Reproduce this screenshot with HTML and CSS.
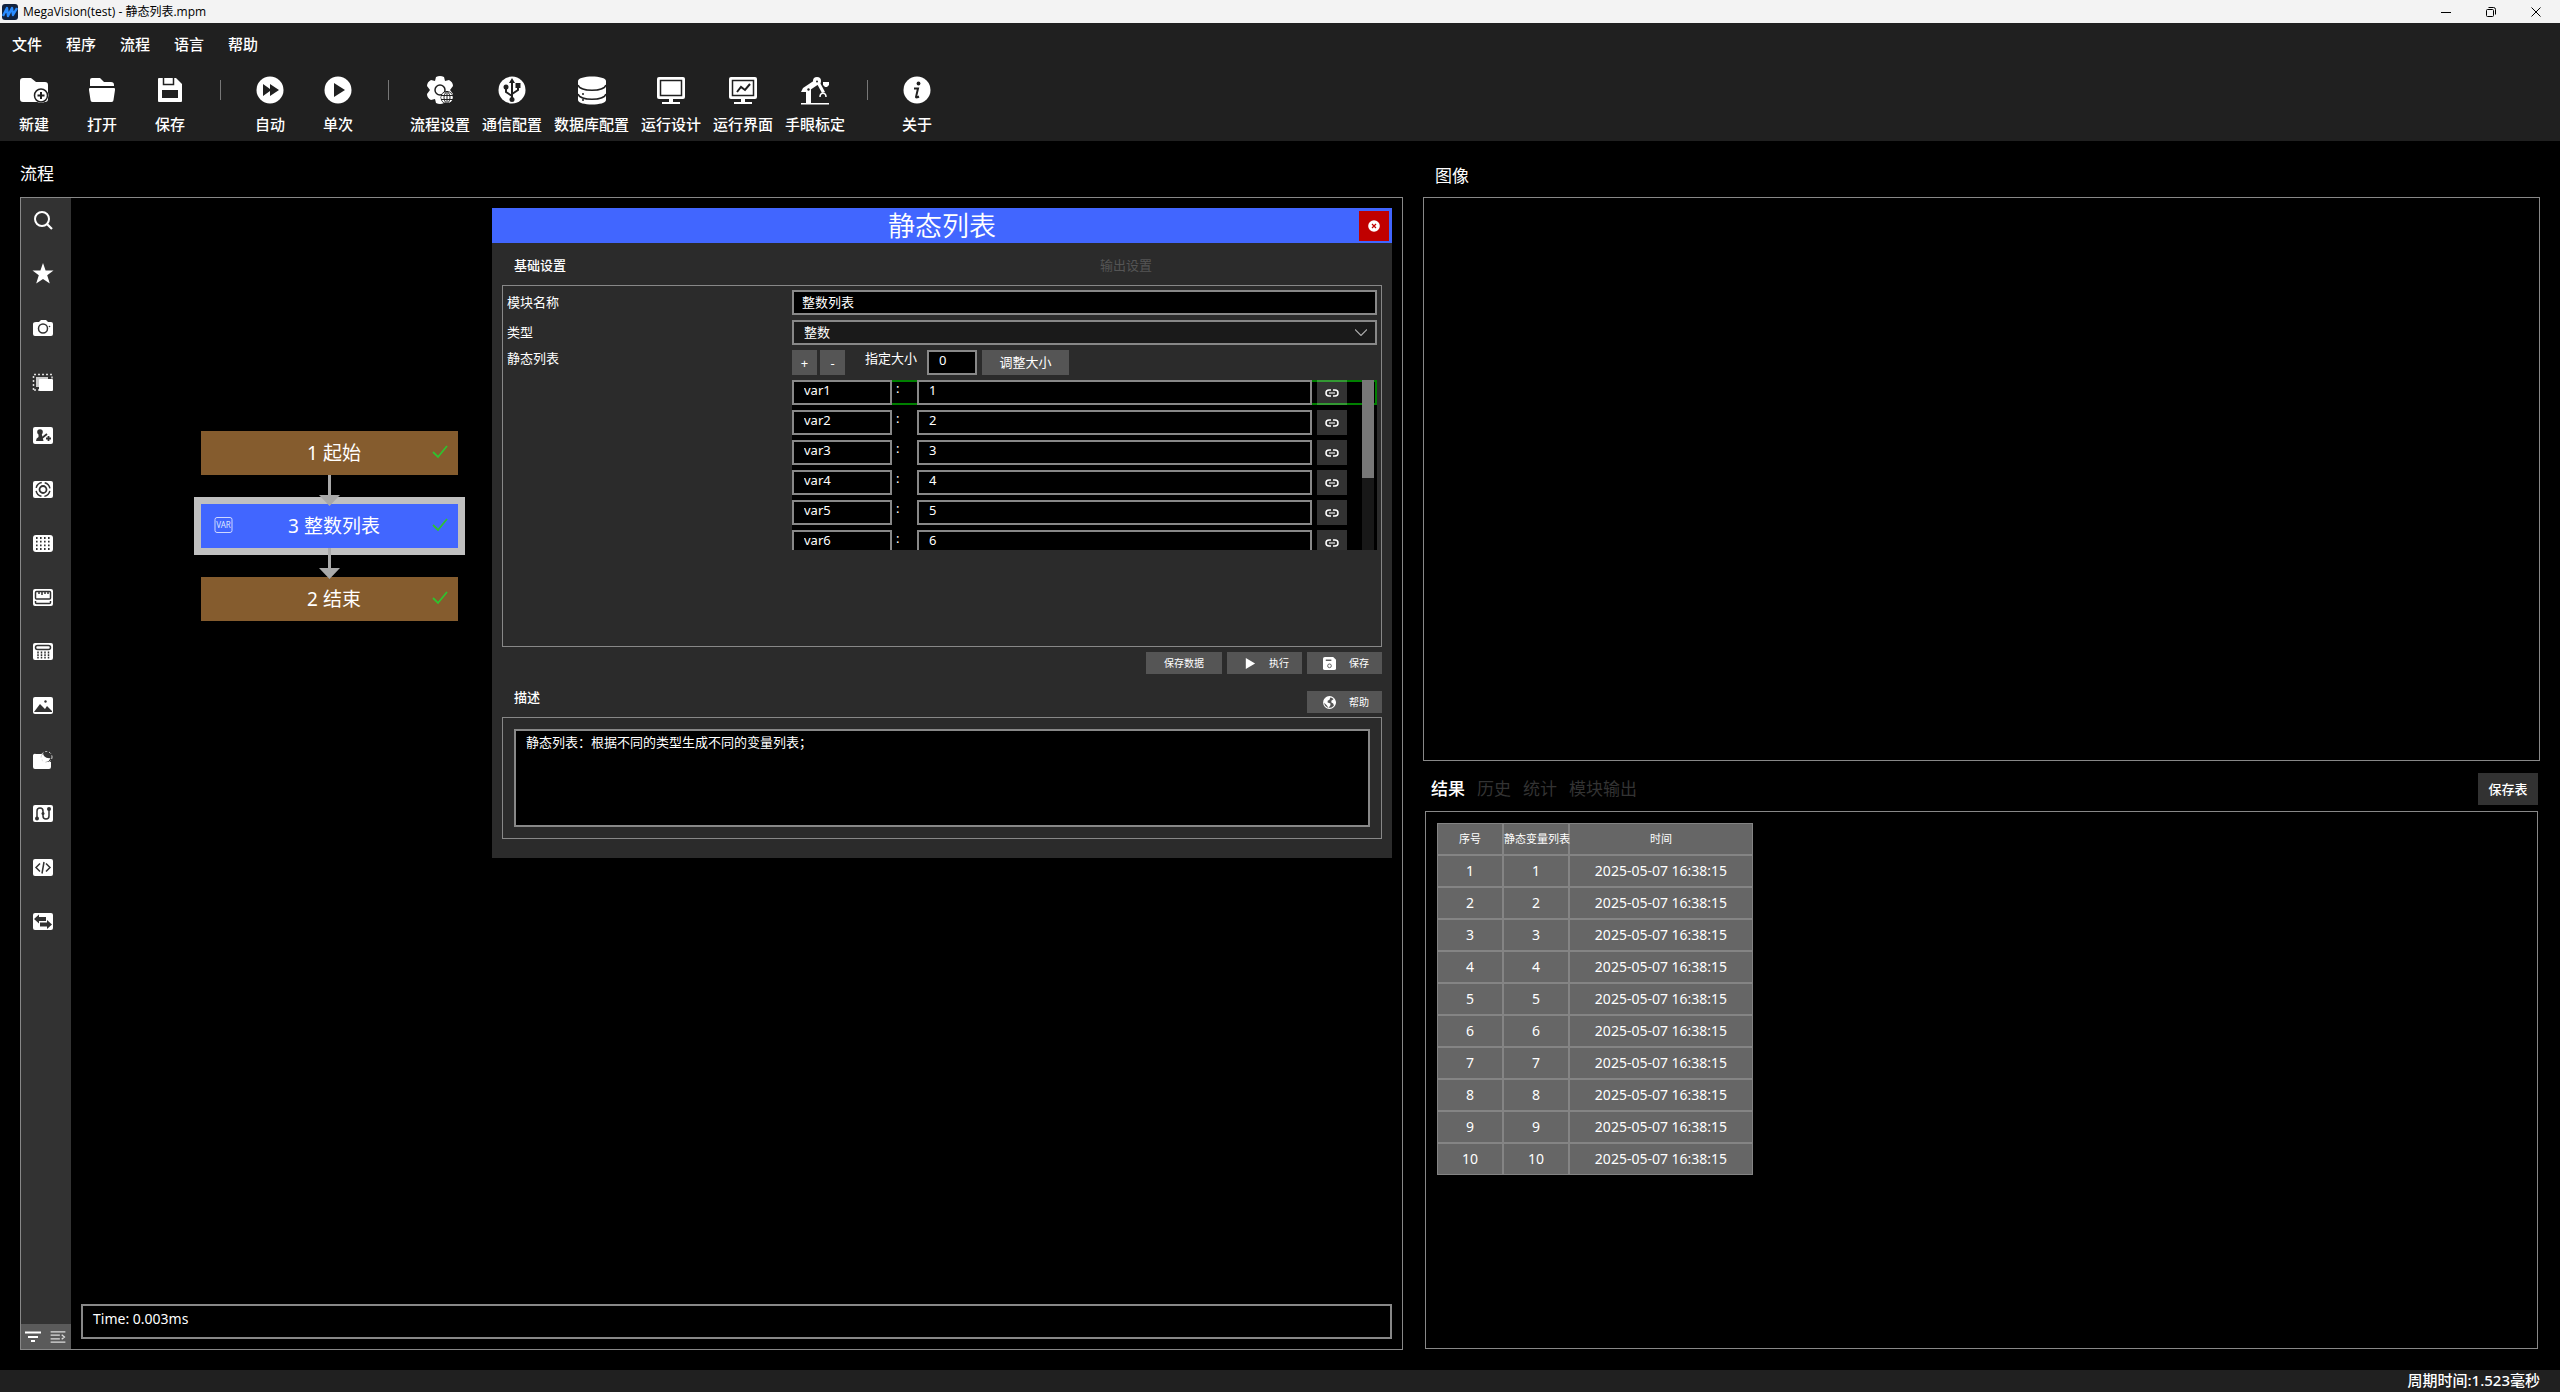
FILE: index.html
```html
<!DOCTYPE html>
<html lang="zh-CN">
<head>
<meta charset="utf-8">
<title>MegaVision(test) - 静态列表.mpm</title>
<link rel="stylesheet" href="styles.css">
</head>
<body>
<svg class="sprite" aria-hidden="true">
  <symbol id="check" viewBox="0 0 16 14"><path d="M1 7l5 5L15 1" fill="none" stroke="#2fc22f" stroke-width="1.8"/></symbol>
  <symbol id="link" viewBox="0 0 14 8"><path d="M6 1H4a3 3 0 0 0 0 6h2M8 1h2a3 3 0 0 1 0 6H8" fill="none" stroke="#fff" stroke-width="1.5"/><path d="M4 4h6" stroke="#bbb" stroke-width="1.6"/></symbol>
</svg>

<header class="titlebar">
  <svg class="logo" viewBox="0 0 16 16"><rect width="16" height="16" rx="3" fill="#12233f"/><path d="M1 12L5 4l1 8 4-8 1 7 4-7" fill="none" stroke="#2a8cff" stroke-width="2.400" stroke-linejoin="round"/></svg>
  <span class="app-name">MegaVision(test) - 静态列表.mpm</span>
  <button class="win" aria-label="最小化"><svg viewBox="0 0 12 12"><path d="M1 6.5h10" stroke="#000"/></svg></button>
  <button class="win" aria-label="还原"><svg viewBox="0 0 12 12" fill="none" stroke="#000"><rect x="1.5" y="3.5" width="7" height="7" rx="1" fill="none"/><path d="M3.5 1.5h5a2 2 0 0 1 2 2v5" fill="none"/></svg></button>
  <button class="win" aria-label="关闭"><svg viewBox="0 0 12 12"><path d="M1.5 1.5l9 9M10.5 1.5l-9 9" stroke="#000"/></svg></button>
</header>

<div class="topbar">
  <nav class="menu">
    <button>文件</button><button>程序</button><button>流程</button><button>语言</button><button>帮助</button>
  </nav>
  <div class="toolbar">
    <button class="tool"><svg viewBox="0 0 28 28"><path d="M3 2h8l5 4h9a3 3 0 0 1 3 3v14a3 3 0 0 1-3 3H3a3 3 0 0 1-3-3V5a3 3 0 0 1 3-3z"/><circle cx="21" cy="19.500" r="7.500"/><circle class="cut" cx="21" cy="19.500" r="6.500"/><path class="cut thick" d="M21 16v7M17.500 19.500h7"/></svg>新建</button>
    <button class="tool"><svg viewBox="0 0 28 28"><path d="M4 2h8l4 4h7a3 3 0 0 1 3 3v1H2V4a2 2 0 0 1 2-2z"/><path d="M2 12h24q1.500 0 1 2l-1.500 10a2 2 0 0 1-2 2h-19a2 2 0 0 1-2-2L1 14q-.5-2 1-2z"/></svg>打开</button>
    <button class="tool"><svg viewBox="0 0 28 28"><path d="M2 3a1 1 0 0 1 1-1h17l6 6v17a1 1 0 0 1-1 1H3a1 1 0 0 1-1-1z"/><path class="cut" d="M7.500 2v6.500h10V2"/><path class="dark" d="M6 14h16v8H6z"/></svg>保存</button>
    <span class="sep"></span>
    <button class="tool"><svg viewBox="0 0 28 28"><circle cx="14" cy="14" r="13.500"/><path class="dark" d="M7 8l7 5V8l9 6-9 6v-5l-7 5z"/></svg>自动</button>
    <button class="tool"><svg viewBox="0 0 28 28"><circle cx="14" cy="14" r="13.500"/><path class="dark" d="M10 7l11 7-11 7z"/></svg>单次</button>
    <span class="sep"></span>
    <button class="tool"><svg viewBox="0 0 28 28"><path d="M10 1q4-2 8 0l1 4 4-1q4 2 4 6l-3 4 3 4q0 4-4 6l-4-1-1 4q-4 2-8 0l-1-4-4 1q-4-2-4-6l3-4-3-4q0-4 4-6l4 1z"/><circle class="cut" cx="14" cy="14" r="5"/><circle class="dark" cx="21" cy="21.500" r="6.500"/><circle cx="21" cy="21.500" r="5.800"/><path class="cut thin" d="M15 19.500h12M15 23.500h12M21 15v13M21 15c-4 4-4 9 0 13M21 15c4 4 4 9 0 13"/></svg>流程设置</button>
    <button class="tool"><svg viewBox="0 0 28 28"><circle cx="14" cy="14" r="13.500"/><path class="cut thick" d="M14 4v19M14 20l-6-4v-5M14 18l6-4V9"/><path class="dark" d="M11 7l3-5 3 5zM17.500 7h5v5h-5z"/><circle class="dark" cx="8" cy="11" r="2.500"/><circle class="dark" cx="14" cy="23.500" r="2.500"/></svg>通信配置</button>
    <button class="tool"><svg viewBox="0 0 28 28"><path d="M0 5C0-1 28-1 28 5v19c0 6-28 6-28 0z"/><path class="cut" d="M0 9c2 7 26 7 28 0M0 18c2 7 26 7 28 0"/><circle class="dark" cx="5" cy="18" r="1"/><circle class="dark" cx="5" cy="24" r="1"/></svg>数据库配置</button>
    <button class="tool"><svg viewBox="0 0 28 28"><rect y="1" width="28" height="22" rx="2"/><path class="cut" d="M3.500 4.500h21v15h-21z"/><path d="M12 23h4v3h-4zM5 26h18v2H5z"/></svg>运行设计</button>
    <button class="tool"><svg viewBox="0 0 28 28"><rect y="1" width="28" height="22" rx="2"/><path class="cut" d="M3.500 4.500h21v15h-21z"/><path class="cut thick" d="M8 16l4-5 4 3 5-6"/><path d="M12 23h4v3h-4zM5 26h18v2H5z"/></svg>运行界面</button>
    <button class="tool"><svg viewBox="0 0 28 28"><path d="M0 27h28v1.500H0zM5 13h5v14H5zM0 16l2-4 12-8 4 4-12 8z"/><circle cx="16" cy="5" r="4"/><path d="M17 3l7 13-3 1-6-11z"/><path d="M22 6h6v3l-2 2h-2l-2-2z"/><circle class="dark" cx="7.500" cy="13.500" r="1.200"/><circle class="dark" cx="16" cy="5.500" r="1"/><path d="M19 21c0-5 6-5 6 0" fill="none" stroke="#fff" stroke-width="1.500"/></svg>手眼标定</button>
    <span class="sep"></span>
    <button class="tool"><svg viewBox="0 0 28 28"><circle cx="14" cy="14" r="13.500"/><circle class="dark" cx="15.500" cy="7.500" r="1.900"/><path class="cut thick" d="M11 12.500h4l-2 8.500q0 1 3-.5"/></svg>关于</button>
  </div>
</div>

<main class="workspace">
  <section class="column">
    <h2 class="heading">流程</h2>
    <div class="flow">
      <aside class="rail">
        <div class="rail-tools">
          <button aria-label="搜索"><svg viewBox="0 0 20 18"><circle cx="9" cy="8" r="7" fill="none" stroke="#fff" stroke-width="2"/><path d="M14 13l5 5" stroke="#fff" stroke-width="2.200"/></svg></button>
          <button aria-label="收藏"><svg viewBox="0 0 20 18"><path d="M10-2l2.600 7.500H20.500l-6.300 4.700L16.800 18.500 10 14 3.200 18.500 5.800 10.200-.5 5.500h7.900z"/></svg></button>
          <button aria-label="相机"><svg viewBox="0 0 20 18"><path d="M3 3h3l2-2h5l2 2h3a2 2 0 0 1 2 2v10a2 2 0 0 1-2 2H2a2 2 0 0 1-2-2V5q0-2 3-2z"/><circle class="hole" cx="10" cy="9.500" r="4.500"/><circle class="ink" cx="16.500" cy="7.500" r=".8"/></svg></button>
          <button aria-label="区域"><svg viewBox="0 0 20 18"><path d="M.5 17V1.500H19V6M1 17h6" fill="none" stroke="#ddd" stroke-width="1.500" stroke-dasharray="2 2"/><path d="M3 4h12v10H3z" fill="#ccc"/><rect x="6" y="6" width="14" height="12" rx="1"/></svg></button>
          <button aria-label="定位"><svg viewBox="0 0 20 18"><rect width="20" height="17" rx="2"/><circle class="ink" cx="7" cy="5" r="2.800"/><path class="ink" d="M5.500 6h3l2 8H3q0-3 2.500-4z"/><path class="hole thick" d="M9 11l5-4M15.500 9v5M13 11.500h5"/></svg></button>
          <button aria-label="检测"><svg viewBox="0 0 20 18"><rect width="20" height="17" rx="2"/><circle class="hole thick" cx="10" cy="8.500" r="3.500"/><circle class="hole" cx="10" cy="8.500" r="7" stroke-dasharray="8 3" stroke-dashoffset="-1.500"/></svg></button>
          <button aria-label="标定板"><svg viewBox="0 0 20 18"><rect width="20" height="17" rx="3"/><path class="hole thick" stroke-dasharray="1.600 2.400" d="M3 3h15M3 6.700h15M3 10.300h15M3 14h15"/></svg></button>
          <button aria-label="测量"><svg viewBox="0 0 20 18"><rect width="20" height="17" rx="2"/><path class="hole" d="M2.500 9V3.500q0-1 1-1h13q1 0 1 1V9q0 1-1 1h-13q-1 0-1-1zM6 2v3M9 2v4M12 2v3M15 2v3M2.500 12v1.500q0 1 1 1h13q1 0 1-1V12"/></svg></button>
          <button aria-label="计算"><svg viewBox="0 0 20 18"><rect width="20" height="17" rx="2"/><rect class="hole" x="2.500" y="2.500" width="15" height="4" rx="2"/><path class="hole" stroke-dasharray="2 .7" d="M5 8.500v7M8.500 8.500v7M12 8.500v7M15.500 8.500v7"/></svg></button>
          <button aria-label="图像"><svg viewBox="0 0 20 18"><rect width="20" height="17" rx="2"/><path class="ink" d="M1 15l6-8 5 5 2-3 5 5v1z"/><circle class="ink" cx="12.500" cy="4.500" r="1.200"/></svg></button>
          <button aria-label="缺陷"><svg viewBox="0 0 20 18"><path d="M3 3h6q-2 8 9 8v5a2 2 0 0 1-2 2H2a2 2 0 0 1-2-2V5a2 2 0 0 1 3-2z"/><circle cx="13" cy="6" r="4.500" fill="#fff"/><path class="ink" d="M10 1q0 7 8 6V1z"/><circle cx="13.500" cy="6" r="5.500" fill="none" stroke="#ddd" stroke-dasharray="2 2"/></svg></button>
          <button aria-label="流程"><svg viewBox="0 0 20 18"><rect width="20" height="17" rx="2"/><path class="hole" d="M4 14V6q0-3 3-3t3 3v5q0 3 3 3t3-3V4"/><circle class="ink" cx="4" cy="13.500" r="2"/><circle class="ink" cx="16" cy="4" r="2"/><circle class="ink" cx="10" cy="8.500" r="1.500"/></svg></button>
          <button aria-label="脚本"><svg viewBox="0 0 20 18"><rect width="20" height="17" rx="2"/><path class="hole" d="M7 4.500L3 8.500l4 4M13 4.500l4 4-4 4M11 3L9 14.500"/></svg></button>
          <button aria-label="通信"><svg viewBox="0 0 20 18"><rect width="20" height="17" rx="2"/><path class="ink" d="M1 6l5-4.500V4h7v4H6v2.500zM19 11.500L14 7v2.500H7v4h7V16z"/></svg></button>
        </div>
        <div class="rail-foot">
          <button aria-label="筛选"><svg viewBox="0 0 16 12"><path d="M0 1.500h16M3 6h10M6 10h4" stroke="#fff" stroke-width="2"/></svg></button>
          <button aria-label="列表"><svg viewBox="0 0 16 13"><path d="M0 1h16M0 4.500h10M0 8.500h10M0 12h16M12 4l3 2.500L12 9" fill="none" stroke="#ddd" stroke-width="1.400"/></svg></button>
        </div>
      </aside>
      <div class="canvas">
        <div class="node n1"><span>1 起始</span><svg class="ok"><use href="#check"/></svg></div>
        <div class="node n2 selected"><svg class="var" viewBox="0 0 18 16"><rect x=".5" y=".5" width="17" height="15" rx="2" fill="none" stroke="#cfd8ff"/><text x="9" y="11" text-anchor="middle">VAR</text></svg><span>3 整数列表</span><svg class="ok"><use href="#check"/></svg></div>
        <div class="node n3"><span>2 结束</span><svg class="ok"><use href="#check"/></svg></div>
        <svg class="arrow a1" viewBox="0 0 21 31"><path d="M9 0h3v20h9L10.500 31 0 20h9z"/></svg>
        <svg class="arrow a2" viewBox="0 0 21 31"><path d="M9 0h3v20h9L10.500 31 0 20h9z"/></svg>

        <section class="dialog" role="dialog" aria-labelledby="dlg-title">
          <header class="dlg-head"><h3 id="dlg-title">静态列表</h3><button class="close" aria-label="关闭"><svg viewBox="0 0 12 12"><circle cx="6" cy="6" r="5.800" fill="#fff"/><path d="M4 4l4 4M8 4L4 8" stroke="#c00000" stroke-width="1.200"/></svg></button></header>
          <nav class="dlg-tabs"><button class="on">基础设置</button><button>输出设置</button></nav>
          <div class="form">
            <label for="name">模块名称</label>
            <input id="name" class="field" value="整数列表">
            <label for="type">类型</label>
            <div class="pick"><select id="type" class="field"><option>整数</option></select><svg viewBox="0 0 12 7"><path d="M0 .5l6 6 6-6" fill="none" stroke="#aaa" stroke-width="1.200"/></svg></div>
            <span class="list-label">静态列表</span>
            <div class="list-side">
              <div class="size-row">
                <button class="btn sq">+</button><button class="btn sq">-</button>
                <label for="size">指定大小</label><input id="size" class="field raised" value="0"><button class="btn resize">调整大小</button>
              </div>
              <div class="list">
                <div class="item active"><input class="field raised" aria-label="名称" value="var1"><b>:</b><input class="field raised" aria-label="值" value="1"><button aria-label="链接"><svg><use href="#link"/></svg></button></div>
                <div class="item"><input class="field raised" aria-label="名称" value="var2"><b>:</b><input class="field raised" aria-label="值" value="2"><button aria-label="链接"><svg><use href="#link"/></svg></button></div>
                <div class="item"><input class="field raised" aria-label="名称" value="var3"><b>:</b><input class="field raised" aria-label="值" value="3"><button aria-label="链接"><svg><use href="#link"/></svg></button></div>
                <div class="item"><input class="field raised" aria-label="名称" value="var4"><b>:</b><input class="field raised" aria-label="值" value="4"><button aria-label="链接"><svg><use href="#link"/></svg></button></div>
                <div class="item"><input class="field raised" aria-label="名称" value="var5"><b>:</b><input class="field raised" aria-label="值" value="5"><button aria-label="链接"><svg><use href="#link"/></svg></button></div>
                <div class="item"><input class="field raised" aria-label="名称" value="var6"><b>:</b><input class="field raised" aria-label="值" value="6"><button aria-label="链接"><svg><use href="#link"/></svg></button></div>
                <div class="scroll"><div class="thumb"></div></div>
              </div>
            </div>
          </div>
          <div class="actions">
            <button class="btn">保存数据</button>
            <button class="btn"><svg viewBox="0 0 14 14"><path d="M3 1l10 6-10 6z"/></svg>执行</button>
            <button class="btn"><svg viewBox="0 0 14 14"><path d="M2 0h9l3 3v9a2 2 0 0 1-2 2H2a2 2 0 0 1-2-2V2a2 2 0 0 1 2-2z"/><path d="M3 3.500h6" stroke="#555" stroke-width="1.500"/><circle cx="7" cy="9.500" r="2" fill="none" stroke="#555"/></svg>保存</button>
          </div>
          <div class="describe"><label for="desc">描述</label><button class="btn"><svg viewBox="0 0 14 14"><circle cx="7" cy="7" r="6.300" fill="none" stroke="#fff" stroke-width="1.200"/><path d="M1 4l3-3 4 0-1 3-2 1v2l3 1 0 2-2 3-2-3-3-3zM9 5l3-2 2 4-2 4-1-3-2-1z"/></svg>帮助</button></div>
          <div class="desc-box"><textarea id="desc" class="field">静态列表：根据不同的类型生成不同的变量列表；</textarea></div>
        </section>

        <output class="time">Time: 0.003ms</output>
      </div>
    </div>
  </section>

  <section class="column output-column">
    <h2 class="heading inset">图像</h2>
    <div class="image"></div>
    <div class="result-head">
      <nav class="tabs"><button class="on">结果</button><button>历史</button><button>统计</button><button>模块输出</button></nav>
      <button class="save-table">保存表</button>
    </div>
    <div class="results">
      <table>
        <colgroup><col class="c-small"><col class="c-small"><col class="c-time"></colgroup>
        <thead><tr><th>序号</th><th>静态变量列表</th><th>时间</th></tr></thead>
        <tbody>
          <tr><td>1</td><td>1</td><td>2025-05-07 16:38:15</td></tr>
          <tr><td>2</td><td>2</td><td>2025-05-07 16:38:15</td></tr>
          <tr><td>3</td><td>3</td><td>2025-05-07 16:38:15</td></tr>
          <tr><td>4</td><td>4</td><td>2025-05-07 16:38:15</td></tr>
          <tr><td>5</td><td>5</td><td>2025-05-07 16:38:15</td></tr>
          <tr><td>6</td><td>6</td><td>2025-05-07 16:38:15</td></tr>
          <tr><td>7</td><td>7</td><td>2025-05-07 16:38:15</td></tr>
          <tr><td>8</td><td>8</td><td>2025-05-07 16:38:15</td></tr>
          <tr><td>9</td><td>9</td><td>2025-05-07 16:38:15</td></tr>
          <tr><td>10</td><td>10</td><td>2025-05-07 16:38:15</td></tr>
        </tbody>
      </table>
    </div>
  </section>
</main>

<footer class="status">周期时间:1.523毫秒</footer>
</body>
</html>
```
FILE: styles.css
```css
* { box-sizing: border-box; }
body {
  margin: 0;
  min-height: 100vh;
  display: flex;
  flex-direction: column;
  background: #000;
  color: #fff;
  font: 13px/20px "Noto Sans", "Noto Sans CJK SC", sans-serif;
}
button {
  border: 0;
  padding: 0;
  background: none;
  color: inherit;
  font: inherit;
}
svg { display: block; fill: #fff; }
h2, h3 { margin: 0; font-weight: 400; }
.sprite { position: absolute; width: 0; height: 0; }

/* window title */
.titlebar {
  display: flex;
  align-items: center;
  height: 23px;
  padding: 0 2px;
  background: #f3f3f3;
  color: #000;
  font-size: 12px;
  font-family: "Open Sans", "Noto Sans CJK SC", sans-serif;
}
.logo { width: 16px; height: 16px; margin-right: 5px; }
.app-name { flex: 1; }
.win { width: 45px; height: 20px; display: grid; place-items: center; }
.win svg { width: 12px; height: 12px; }

/* menu and tool bar */
.topbar {
  height: 118px;
  background: #202020;
  font-size: 15px;
  font-weight: 500;
  font-family: "Noto Sans CJK SC", sans-serif;
}
.menu { display: flex; padding-top: 11px; }
.menu button { padding: 0 12px; }
.toolbar { display: flex; padding-top: 22px; }
.tool {
  min-width: 68px;
  padding: 0 6px;
  display: flex;
  flex-direction: column;
  align-items: center;
  gap: 10px;
  line-height: 20px;
}
.tool svg { width: 28px; height: 28px; overflow: visible; }
.cut { fill: none; stroke: #202020; stroke-width: 1.5; }
.cut.thick { stroke-width: 2; }
.cut.thin { stroke-width: 1; }
.dark { fill: #202020; }
.sep { width: 32px; height: 20px; margin-top: 4px; display: flex; justify-content: center; }
.sep::before { content: ""; width: 1px; background: #777; }

/* main columns */
.workspace {
  flex: 1;
  display: grid;
  grid-template-columns: 1383fr 1117fr;
  gap: 20px;
  padding: 0 20px 20px;
}
.column { display: flex; flex-direction: column; min-width: 0; }
.output-column { display: grid; grid-template-rows: 56px 564fr 50px 539fr; }
.heading {
  height: 56px;
  padding-top: 22px;
  font-size: 17px;
  line-height: 20px;
  font-family: "Noto Sans CJK SC", sans-serif;
}
.heading.inset { padding: 24px 0 0 12px; }
.flow { flex: 1; display: flex; border: 1px solid #888; }

/* left rail */
.rail {
  width: 50px;
  display: flex;
  flex-direction: column;
  justify-content: space-between;
  background: #323232;
}
.rail-tools { display: flex; flex-direction: column; gap: 10px; }
.rail-tools button { height: 44px; padding-right: 6px; display: grid; place-items: center; }
.rail-tools svg { width: 20px; height: 18px; overflow: visible; }
.hole { fill: none; stroke: #323232; stroke-width: 1.5; }
.hole.thick { stroke-width: 1.8; }
.ink { fill: #323232; }
.rail-foot { display: flex; height: 25px; padding-right: 1px; background: #5a5a5a; }
.rail-foot button { flex: 1; display: grid; place-items: center; }
.rail-foot svg { width: 16px; height: 12px; }

/* flow canvas */
.canvas { flex: 1; position: relative; display: flex; align-items: flex-end; padding: 10px; }
.node {
  position: absolute;
  left: 130px;
  width: 257px;
  height: 44px;
  padding-left: 9px;
  display: grid;
  place-items: center;
  background: #855c2e;
  font-size: 19px;
}
.n1 { top: 233px; }
.n2 { top: 306px; }
.n3 { top: 379px; }
.selected { background: #4166ff; box-shadow: 0 0 0 7px #c0c0c0; }
.ok { position: absolute; right: 10px; top: 14px; width: 16px; height: 14px; }
.var { position: absolute; left: 13px; top: 13px; width: 19px; height: 16px; }
.var text { font: 8px "Noto Sans", sans-serif; fill: #dfe5ff; }
.arrow { position: absolute; left: 248px; width: 21px; height: 31px; fill: #a9a9a9; }
.a1 { top: 277px; }
.a2 { top: 350px; }
.time { flex: 1; height: 35px; padding: 2px 10px; border: 2px solid #888; font-size: 14px; line-height: 22px; }

/* module dialog */
.dialog {
  position: absolute;
  top: 10px;
  right: 10px;
  width: 900px;
  padding-bottom: 19px;
  background: #2b2b2b;
}
.dlg-head { display: flex; align-items: center; height: 35px; padding: 0 3px; background: #4166ff; }
.dlg-head h3 { flex: 1; padding-left: 30px; text-align: center; font-size: 27px; line-height: 35px; font-weight: 350; }
.close { width: 30px; height: 30px; display: grid; place-items: center; background: #c00000; }
.close svg { width: 12px; height: 12px; }
.dlg-tabs { display: flex; gap: 534px; height: 42px; padding: 2px 22px 0; }
.dlg-tabs button { color: #555; }
.dlg-tabs .on { color: #fff; font-weight: 500; }
.form {
  display: grid;
  grid-template-columns: 280px 1fr;
  grid-template-rows: 25px 25px 1fr;
  gap: 5px;
  height: 362px;
  margin: 0 10px;
  padding: 4px;
  border: 1px solid #888;
}
.form > label { padding-top: 2px; }
.form > .list-label { line-height: 16px; }
.field {
  width: 100%;
  height: 25px;
  min-width: 0;
  padding: 0 8px 2px;
  border: 2px solid #888;
  border-radius: 0;
  background: #000;
  color: #fff;
  font: inherit;
  outline: 0;
}
.raised { padding: 0 10px 6px; }
.pick { position: relative; }
.pick select { appearance: none; padding: 0 10px 2px; background: #1a1a1a; }
.pick svg { position: absolute; right: 10px; top: 9px; width: 12px; height: 7px; }
.size-row { display: flex; height: 25px; margin-bottom: 5px; }
.btn { background: #555; }
.sq { width: 25px; margin-right: 3px; }
.size-row label { margin: 0 10px 0 17px; line-height: 17px; }
.size-row .field { width: 50px; }
.resize { width: 87px; margin-left: 5px; padding-bottom: 1px; }
.list {
  position: relative;
  height: 170px;
  overflow: hidden;
  background: #000;
  display: flex;
  flex-direction: column;
  gap: 5px;
}
.item { display: grid; grid-template-columns: 100px 25px 1fr 30px; flex: 0 0 25px; padding-right: 30px; }
.item.active {
  background:
    linear-gradient(green, green) top / 100% 2px no-repeat,
    linear-gradient(green, green) bottom / 100% 2px no-repeat,
    linear-gradient(green, green) right / 2px 100% no-repeat;
}
.item b { padding-left: 4px; font-weight: 400; line-height: 17px; }
.item b + .field { width: calc(100% - 5px); }
.item button { display: grid; place-items: center; background: rgba(255, 255, 255, .2); }
.item svg { width: 14px; height: 8px; }
.scroll { position: absolute; right: 3px; top: 0; bottom: 0; width: 12px; background: #181818; }
.thumb { height: 98px; background: #777; }
.actions { display: flex; justify-content: flex-end; gap: 5px; padding: 5px 10px 0; font-size: 10px; }
.actions .btn, .describe .btn {
  min-width: 75px;
  height: 22px;
  display: flex;
  align-items: center;
  justify-content: flex-end;
  gap: 13px;
  padding: 0 13px;
}
.actions .btn:first-child { padding: 0 18px; }
.actions svg, .describe svg { width: 13px; height: 13px; }
.describe { display: flex; justify-content: space-between; height: 43px; padding: 17px 10px 0 22px; }
.describe label { line-height: 12px; font-weight: 500; }
.describe .btn { font-size: 10px; }
.desc-box { margin: 0 10px; padding: 11px; border: 1px solid #888; }
textarea.field { display: block; height: 98px; padding: 0 10px; resize: none; line-height: 22px; }

/* image and results */
.image { border: 1px solid #888; }
.result-head { display: flex; justify-content: space-between; padding: 12px 2px 0 8px; }
.tabs { display: flex; gap: 12px; font: 17px/30px "Noto Sans CJK SC", sans-serif; align-items: flex-start; color: #333; }
.tabs .on { color: #fff; font-weight: 500; }
.save-table { width: 60px; height: 32px; background: #323232; font-weight: 500; }
.results { margin: 0 2px 1px; padding: 11px; border: 1px solid #888; }
table { width: 316px; table-layout: fixed; border-spacing: 0; font-size: 14px; text-align: center; }
.c-small { width: 66px; }
.c-time { width: 184px; }
th, td { height: 32px; padding: 0; background: #666; border: 1px solid #848484; line-height: 20px; white-space: nowrap; }
th { font-size: 11px; font-weight: 400; }

.status {
  height: 22px;
  padding-right: 20px;
  background: #202020;
  text-align: right;
  font-size: 15px;
  font-weight: 500;
  line-height: 20px;
}
```
